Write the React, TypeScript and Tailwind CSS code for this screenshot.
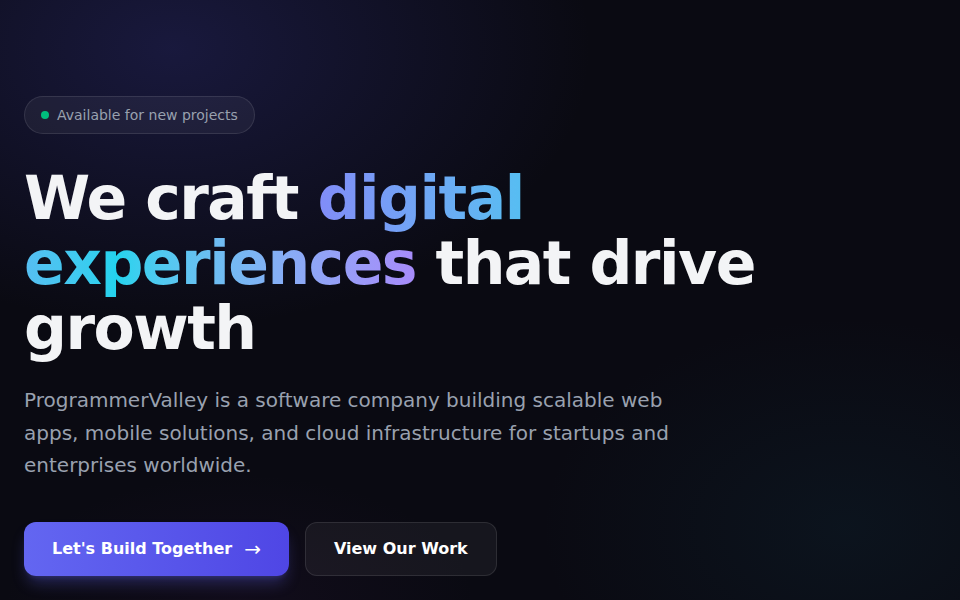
import React from "react";

export default function App() {
  return (
    <div
      className="relative min-h-[600px] w-full overflow-hidden bg-[#0a0a12] text-white"
      style={{ fontFamily: '"DejaVu Sans", Verdana, sans-serif' }}
    >
      <div className="pointer-events-none absolute inset-0 bg-[radial-gradient(ellipse_58%_62%_at_18%_8%,rgba(45,45,120,0.42),transparent_75%)]" />
      <div className="pointer-events-none absolute inset-0 bg-[radial-gradient(ellipse_45%_50%_at_88%_88%,rgba(20,70,90,0.16),transparent_70%)]" />
      <div className="pointer-events-none absolute inset-0 bg-[radial-gradient(ellipse_35%_30%_at_25%_100%,rgba(70,30,90,0.12),transparent_70%)]" />

      <div className="relative flex flex-col items-start px-6 pt-24">
        <div className="flex items-center gap-2 rounded-full border border-white/10 bg-white/5 px-4 py-2">
          <span className="h-2 w-2 rounded-full bg-emerald-500" />
          <span className="text-sm leading-5 text-gray-400">Available for new projects</span>
        </div>

        <h1 className="mt-8 max-w-4xl text-6xl font-bold leading-[1.08] tracking-tight text-gray-100">
          We craft{" "}
          <span className="bg-linear-to-r from-[#818cf8] via-[#22d3ee] to-[#a78bfa] bg-clip-text text-transparent">
            digital experiences
          </span>{" "}
          that drive growth
        </h1>

        <p className="mt-6 max-w-2xl text-xl leading-relaxed text-gray-400">
          ProgrammerValley is a software company building scalable web apps, mobile solutions, and cloud
          infrastructure for startups and enterprises worldwide.
        </p>

        <div className="mt-10 flex items-center gap-4">
          <button className="flex h-[54px] items-center gap-3 rounded-xl bg-linear-to-r from-[#6366f1] to-[#4f46e5] px-7 text-base font-bold text-white shadow-lg shadow-[#6366f1]/30">
            Let's Build Together <span className="text-xl font-normal leading-none">→</span>
          </button>
          <button className="flex h-[54px] items-center rounded-xl border border-white/10 bg-white/5 px-7 text-base font-bold text-white">
            View Our Work
          </button>
        </div>
      </div>
    </div>
  );
}
